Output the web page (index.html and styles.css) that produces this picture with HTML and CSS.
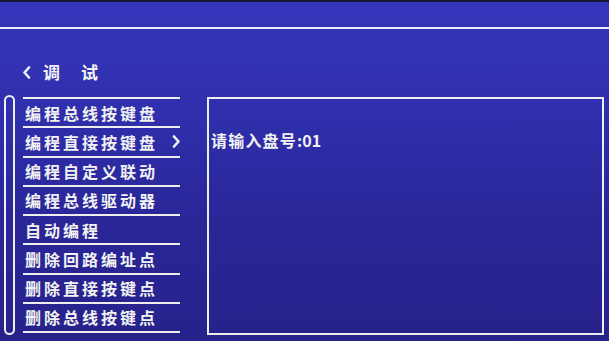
FILE: index.html
```html
<!DOCTYPE html>
<html lang="zh-CN">
<head>
<meta charset="utf-8">
<title>调试</title>
<link rel="stylesheet" href="styles.css">
</head>
<body>
<div class="screen">
  <div class="header"></div>
  <div class="title">
    <svg class="back" width="9" height="13" viewBox="0 0 9 13"><polyline points="7,1.5 2.5,6.5 7,11.5" fill="none" stroke="#f2f2f2" stroke-width="2.6" stroke-linecap="round" stroke-linejoin="round"/></svg>
    <span class="title-text">调</span>
    <span class="title-text">试</span>
  </div>
  <div class="main">
    <div class="scroll"></div>
    <ul class="menu">
      <li class="item">编程总线按键盘</li>
      <li class="item">编程直接按键盘<svg class="arrow" width="9" height="13" viewBox="0 0 9 13"><polyline points="2,1.5 6.5,6.5 2,11.5" fill="none" stroke="#f2f2f2" stroke-width="2.6" stroke-linecap="round" stroke-linejoin="round"/></svg></li>
      <li class="item">编程自定义联动</li>
      <li class="item">编程总线驱动器</li>
      <li class="item">自动编程</li>
      <li class="item">删除回路编址点</li>
      <li class="item">删除直接按键点</li>
      <li class="item last">删除总线按键点</li>
    </ul>
    <div class="panel">
      <div class="prompt"><span class="cjk">请输入盘号</span>:01</div>
    </div>
  </div>
</div>
</body>
</html>
```
FILE: styles.css
```css
html, body {
  margin: 0;
  padding: 0;
  background: #2a268f;
}
.screen {
  width: 609px;
  height: 341px;
  overflow: hidden;
  background: linear-gradient(180deg, #3636bd 0%, #3030ae 30%, #2a2698 65%, #27228a 100%);
  font-family: "Noto Sans CJK SC", "Noto Sans", sans-serif;
  font-weight: 700;
  color: #f2f2f2;
}
.header {
  height: 25px;
  border-top: 2px solid #15153a;
  border-bottom: 2px solid #ececf4;
}
.title {
  display: flex;
  align-items: center;
  height: 20px;
  margin-top: 33px;
  margin-bottom: 13px;
  padding-left: 22px;
}
.back {
  display: block;
  margin-right: 12px;
}
.title-text {
  font-size: 17px;
  line-height: 20px;
  width: 17px;
  margin-right: 21px;
}
.main {
  display: flex;
  align-items: flex-start;
  padding-left: 4px;
}
.scroll {
  flex-shrink: 0;
  width: 7px;
  height: 236px;
  border: 2px solid #eeeeee;
  border-radius: 6px;
}
.menu {
  flex-shrink: 0;
  list-style: none;
  margin: 2px 0 0 8px;
  padding: 0;
  width: 157px;
}
.item {
  display: flex;
  align-items: center;
  height: 27.25px;
  border-top: 2px solid #eeeeee;
  padding-left: 2px;
  font-size: 16px;
  letter-spacing: 3px;
  white-space: nowrap;
}
.item.last {
  border-bottom: 2px solid #eeeeee;
}
.arrow {
  display: block;
  flex-shrink: 0;
  margin-left: 14px;
}
.panel {
  flex-shrink: 0;
  margin: 2px 0 0 27px;
  width: 393px;
  height: 234px;
  border: 2px solid #eeeeee;
}
.prompt {
  padding: 31px 0 0 2px;
  font-size: 16px;
  line-height: 20px;
  white-space: nowrap;
}
.cjk {
  letter-spacing: 1.2px;
}
```
